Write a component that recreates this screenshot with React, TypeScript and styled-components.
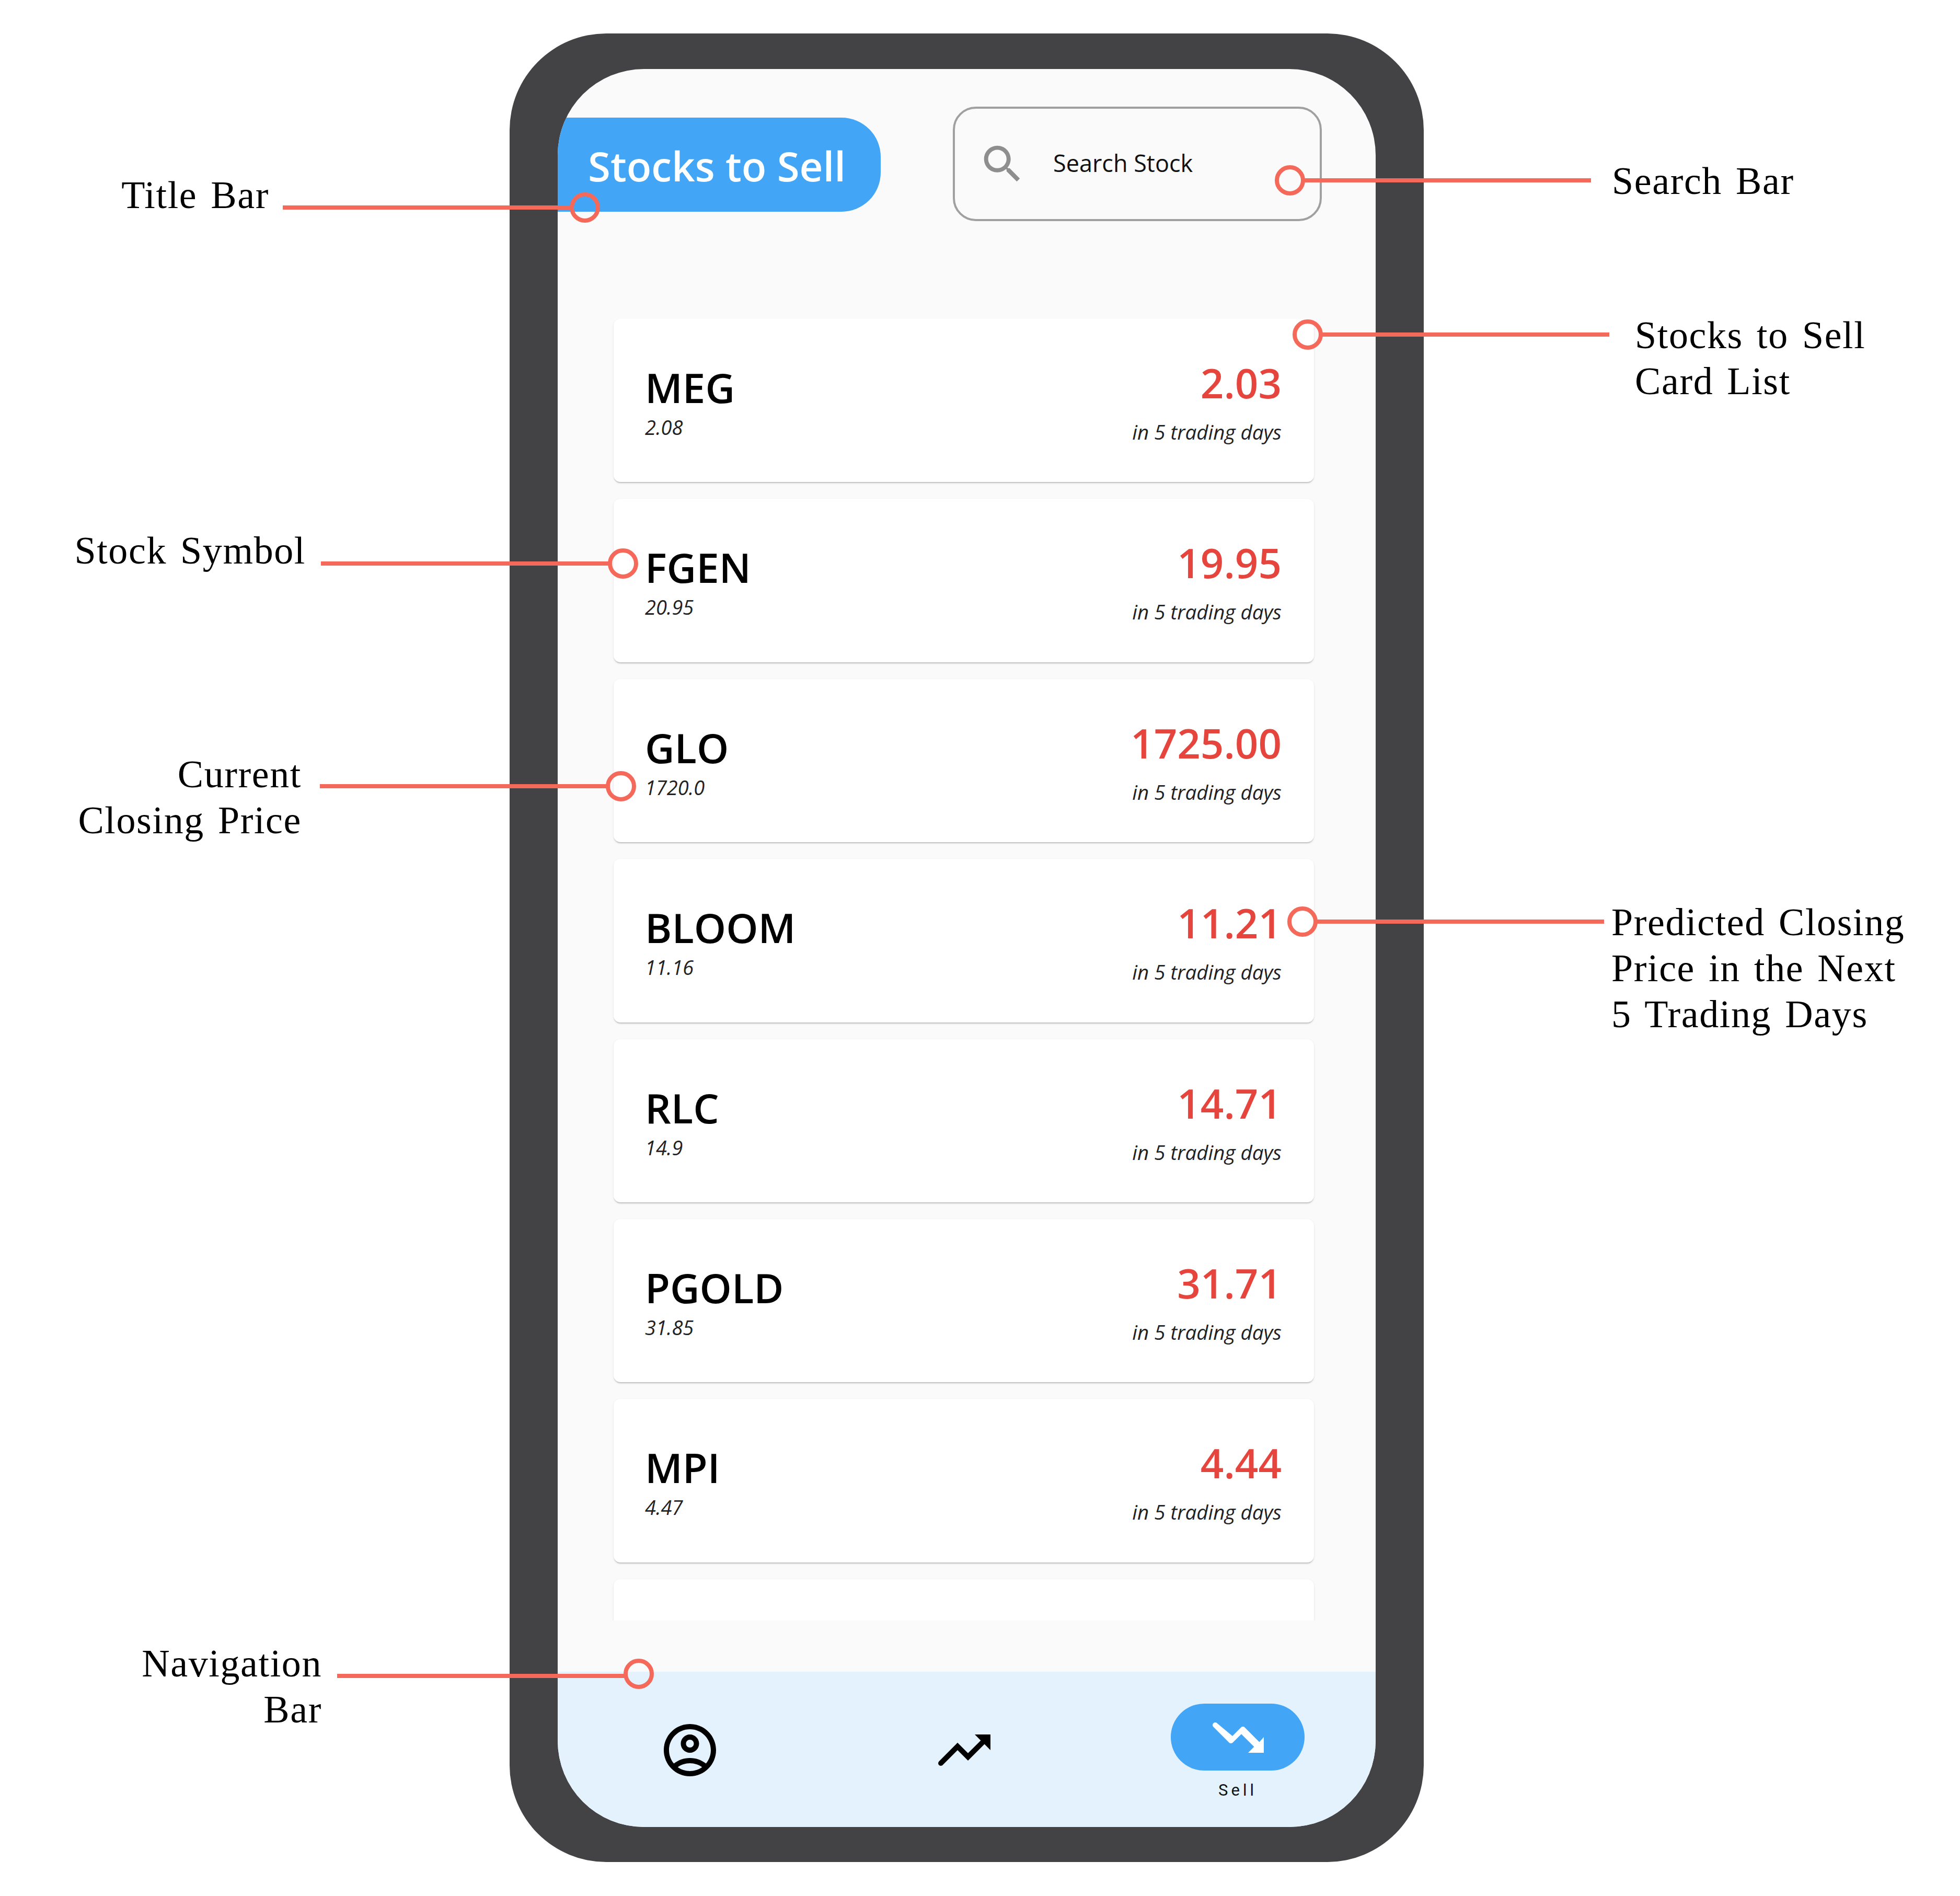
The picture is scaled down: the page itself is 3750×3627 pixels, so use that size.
import React from "react";
import styled, { createGlobalStyle } from "styled-components";

const Global = createGlobalStyle`
  html, body { margin: 0; padding: 0; background: #fff; }
`;

const Page = styled.div`
  position: relative;
  width: 3750px;
  height: 3627px;
  box-sizing: border-box;
  padding: 64px 0 0 975px;
  background: #fff;
  overflow: hidden;
  font-family: "Open Sans", sans-serif;
`;

const Phone = styled.div`
  width: 1749px;
  height: 3498px;
  box-sizing: border-box;
  padding: 68px 92px 67px;
  background: #434244;
  border-radius: 185px;
`;

const Screen = styled.div`
  height: 100%;
  display: flex;
  flex-direction: column;
  background: #fafafa;
  border-radius: 165px;
  overflow: hidden;
`;

const Header = styled.header`
  display: flex;
  align-items: flex-start;
  flex: none;
`;

const TitleBar = styled.h1`
  box-sizing: border-box;
  width: 618px;
  height: 180px;
  margin: 93px 0 0;
  padding: 3px 0 0 58px;
  display: flex;
  align-items: center;
  background: #42a5f5;
  border-radius: 0 75px 75px 0;
  color: #fff;
  font-size: 78px;
  font-weight: 600;
  white-space: nowrap;
`;

const SearchBar = styled.div`
  box-sizing: border-box;
  width: 706px;
  height: 219px;
  margin: 72px 0 0 138px;
  padding-left: 44px;
  display: flex;
  align-items: center;
  gap: 50px;
  border: 4px solid #a0a0a0;
  border-radius: 44px;
`;

const SearchIcon = styled.svg`
  width: 94px;
  height: 94px;
  flex: none;
  fill: #8e8e8e;
`;

const SearchText = styled.span`
  padding-bottom: 4px;
  font-size: 45px;
  color: #111;
`;

const CardList = styled.div`
  height: 2490px;
  margin-top: 187px;
  padding: 0 118px 0 107px;
  display: flex;
  flex-direction: column;
  gap: 32px;
  overflow: hidden;
  flex: none;
`;

const Card = styled.article`
  box-sizing: border-box;
  height: 312.4px;
  flex: none;
  display: flex;
  justify-content: space-between;
  padding: 0 62px 0 60px;
  background: #fff;
  border-radius: 13px;
  box-shadow: 0 3px 2px -1px rgba(0, 0, 0, 0.18), 0 2px 4px rgba(0, 0, 0, 0.08), 0 0 2px rgba(0, 0, 0, 0.03);
`;

const SymbolColumn = styled.div`
  padding-top: 81px;
`;

const PriceColumn = styled.div`
  padding-top: 72px;
  text-align: right;
`;

const Symbol = styled.div`
  font-size: 78px;
  line-height: 100px;
  font-weight: 600;
  color: #000;
`;

const ClosePrice = styled.div`
  margin-top: 1px;
  font-size: 38px;
  line-height: 50px;
  font-style: italic;
  color: #222;
`;

const Predicted = styled.div`
  font-size: 78px;
  line-height: 100px;
  font-weight: 600;
  color: #e5453c;
`;

const Horizon = styled.div`
  margin-top: 19px;
  font-size: 38.6px;
  line-height: 50px;
  font-style: italic;
  color: #222;
`;

const NavBar = styled.nav`
  margin-top: auto;
  height: 297px;
  flex: none;
  display: grid;
  grid-template-columns: 506px 544px 502px;
  padding-right: 13px;
  background: #e3f2fd;
`;

const NavItem = styled.div<{ $active?: boolean }>`
  display: flex;
  flex-direction: column;
  align-items: center;
  padding-top: ${(p) => (p.$active ? "61px" : "90px")};
`;

const NavIcon = styled.svg`
  width: 120px;
  height: 120px;
  fill: #000;
`;

const ActivePill = styled.div`
  width: 256px;
  height: 128px;
  display: flex;
  align-items: center;
  justify-content: center;
  background: #42a5f5;
  border-radius: 64px;
`;

const ActiveIcon = styled.svg`
  width: 120px;
  height: 120px;
  fill: #fff;
`;

const NavLabel = styled.span`
  margin-top: 18px;
  font-family: Roboto, sans-serif;
  font-size: 31px;
  line-height: 40px;
  letter-spacing: 6px;
  color: #111;
`;

const Note = styled.div<{ $left?: number; $right?: number; $top: number }>`
  position: absolute;
  top: ${(p) => p.$top}px;
  ${(p) => (p.$left !== undefined ? `left: ${p.$left}px; text-align: left;` : "")}
  ${(p) => (p.$right !== undefined ? `right: ${3750 - p.$right}px; text-align: right;` : "")}
  font-family: "Liberation Serif", serif;
  font-size: 74px;
  line-height: 88px;
  letter-spacing: 1.6px;
  word-spacing: 6px;
  color: #000;
  white-space: pre;
`;

const Leader = styled.div<{ $from: number; $to: number; $y: number }>`
  position: absolute;
  left: ${(p) => p.$from}px;
  top: ${(p) => p.$y - 4}px;
  width: ${(p) => p.$to - p.$from}px;
  height: 8px;
  background: #f4695a;
`;

const Marker = styled.div<{ $x: number; $y: number }>`
  position: absolute;
  left: ${(p) => p.$x - 29}px;
  top: ${(p) => p.$y - 29}px;
  width: 58px;
  height: 58px;
  box-sizing: border-box;
  border: 8px solid #f4695a;
  border-radius: 50%;
`;

const stocks = [
  ["MEG", "2.08", "2.03"],
  ["FGEN", "20.95", "19.95"],
  ["GLO", "1720.0", "1725.00"],
  ["BLOOM", "11.16", "11.21"],
  ["RLC", "14.9", "14.71"],
  ["PGOLD", "31.85", "31.71"],
  ["MPI", "4.47", "4.44"],
];

const notes = [
  { text: "Title Bar", right: 515, top: 329, from: 541, to: 1092, y: 397, mx: 1119, my: 397 },
  { text: "Search Bar", left: 3084, top: 302, from: 2495, to: 3044, y: 345, mx: 2468, my: 345 },
  { text: "Stocks to Sell\nCard List", left: 3128, top: 597, from: 2529, to: 3079, y: 640, mx: 2502, my: 640 },
  { text: "Stock Symbol", right: 585, top: 1009, from: 614, to: 1165, y: 1078, mx: 1192, my: 1078 },
  { text: "Current\nClosing Price", right: 577, top: 1437, from: 612, to: 1162, y: 1504, mx: 1188, my: 1504 },
  { text: "Predicted Closing\nPrice in the Next\n5 Trading Days", left: 3083, top: 1720, from: 2519, to: 3069, y: 1763, mx: 2492, my: 1763 },
  { text: "Navigation\nBar", right: 616, top: 3138, from: 645, to: 1198, y: 3206, mx: 1222, my: 3202 },
];

export default function App() {
  return (
    <Page>
      <Global />
      <Phone>
        <Screen>
          <Header>
            <TitleBar>Stocks to Sell</TitleBar>
            <SearchBar>
              <SearchIcon viewBox="0 0 24 24">
                <path d="M15.5 14h-.79l-.28-.27C15.41 12.59 16 11.11 16 9.5 16 5.91 13.09 3 9.5 3S3 5.91 3 9.5 5.91 16 9.5 16c1.61 0 3.09-.59 4.23-1.57l.27.28v.79l5 4.99L20.49 19l-4.99-5zm-6 0C7.01 14 5 11.99 5 9.5S7.01 5 9.5 5 14 7.01 14 9.5 11.99 14 9.5 14z" />
              </SearchIcon>
              <SearchText>Search Stock</SearchText>
            </SearchBar>
          </Header>
          <CardList>
            {stocks.map(([symbol, close, predicted]) => (
              <Card key={symbol}>
                <SymbolColumn>
                  <Symbol>{symbol}</Symbol>
                  <ClosePrice>{close}</ClosePrice>
                </SymbolColumn>
                <PriceColumn>
                  <Predicted>{predicted}</Predicted>
                  <Horizon>in 5 trading days</Horizon>
                </PriceColumn>
              </Card>
            ))}
            <Card />
          </CardList>
          <NavBar>
            <NavItem>
              <NavIcon viewBox="0 0 24 24">
                <path d="M12 2C6.48 2 2 6.48 2 12s4.48 10 10 10 10-4.48 10-10S17.52 2 12 2zM7.35 18.5C8.66 17.56 10.26 17 12 17s3.34.56 4.65 1.5c-1.31.94-2.91 1.5-4.65 1.5s-3.34-.56-4.65-1.5zm10.79-1.38C16.45 15.8 14.32 15 12 15s-4.45.8-6.14 2.12C4.7 15.73 4 13.95 4 12c0-4.42 3.58-8 8-8s8 3.58 8 8c0 1.95-.7 3.73-1.86 5.12z" />
                <path d="M12 6c-1.93 0-3.5 1.57-3.5 3.5S10.07 13 12 13s3.5-1.57 3.5-3.5S13.93 6 12 6zm0 5c-.83 0-1.5-.67-1.5-1.5S11.17 8 12 8s1.5.67 1.5 1.5S12.83 11 12 11z" />
              </NavIcon>
            </NavItem>
            <NavItem>
              <NavIcon viewBox="0 0 24 24">
                <path d="M16 6l2.29 2.29-4.88 4.88-4-4L2.3 16.3c-.39.39-.39 1.02 0 1.41.39.39 1.02.39 1.41 0L9.41 12l4 4 6.3-6.29L22 12V6z" />
              </NavIcon>
            </NavItem>
            <NavItem $active>
              <ActivePill>
                <ActiveIcon viewBox="0 0 24 24">
                  <path d="M16 18l2.29-2.29-4.88-4.88-3.29 3.29c-.39.39-1.02.39-1.41 0l-6-6.01c-.39-.39-.39-1.02 0-1.41.39-.39 1.02-.39 1.41 0L10 11.59l3.29-3.29c.39-.39 1.02-.39 1.41 0l5.59 5.58L22 12v6z" />
                </ActiveIcon>
              </ActivePill>
              <NavLabel>Sell</NavLabel>
            </NavItem>
          </NavBar>
        </Screen>
      </Phone>
      {notes.map((n) => (
        <React.Fragment key={n.text}>
          <Leader $from={n.from} $to={n.to} $y={n.y} />
          <Marker $x={n.mx} $y={n.my} />
          <Note $left={n.left} $right={n.right} $top={n.top}>{n.text}</Note>
        </React.Fragment>
      ))}
    </Page>
  );
}
